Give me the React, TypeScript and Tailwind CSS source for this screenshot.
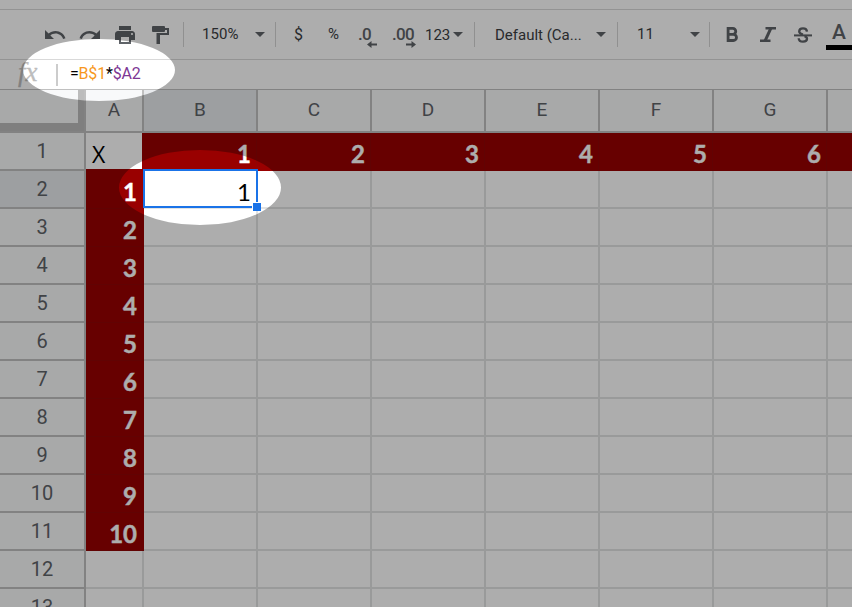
import React from "react";
import { MdUndo, MdRedo, MdPrint } from "react-icons/md";

const columns = ["B", "C", "D", "E", "F", "G", ""];
const rows = Array.from({ length: 13 }, (_, i) => i + 1);

function Separator({ className = "" }: { className?: string }) {
  return <div className={`h-[25px] w-px shrink-0 bg-[#d5d5d5] ${className}`} />;
}

function Caret({ className = "" }: { className?: string }) {
  return (
    <svg className={`h-[5px] w-[10px] shrink-0 fill-[#5f6368] ${className}`} viewBox="0 0 10 5">
      <path d="M0 0h10L5 5z" />
    </svg>
  );
}

function PaintRoller() {
  return (
    <svg className="ml-[15px] h-[18px] w-[17px] shrink-0 fill-[#5f6368]" viewBox="0 0 17 18">
      <path d="M1 0h11q1 0 1 1v1h4v7H8v9H4.500V7H15V4h-2v1q0 1-1 1H1Q0 6 0 5V1Q0 0 1 0z" />
    </svg>
  );
}

function Decimal({ label, right }: { label: string; right?: boolean }) {
  return (
    <div className="relative shrink-0 pb-px text-[17px] leading-5 font-medium tracking-[-0.700px] text-[#5f6368]">
      {label}
      <svg
        className={`absolute bottom-[-3px] h-[7px] w-[10px] fill-[#5f6368] ${right ? "right-[-2px]" : "right-[-6px]"}`}
        viewBox="0 0 10 7"
      >
        <path d={right ? "M0 2.500h5.500V0L10 3.500 5.500 7V4.500H0z" : "M10 2.500H4.500V0L0 3.500 4.500 7V4.500H10z"} />
      </svg>
    </div>
  );
}

function Toolbar() {
  return (
    <div className="flex h-[50px] items-center border-b border-[#d9d9d9] text-[15px] text-[#3c4043]">
      <MdUndo className="ml-[43px] size-6 shrink-0 text-[#5f6368]" />
      <MdRedo className="ml-[11px] size-6 shrink-0 text-[#5f6368]" />
      <MdPrint className="ml-[11px] size-6 shrink-0 text-[#5f6368]" />
      <PaintRoller />
      <Separator className="ml-[14px]" />
      <div className="ml-[18px] w-[53px] shrink-0 tracking-[0.100px]">150%</div>
      <Caret />
      <Separator className="ml-[10px]" />
      <div className="ml-[18px] w-[34px] shrink-0 text-[16px]">$</div>
      <div className="w-[30px] shrink-0">%</div>
      <div className="flex w-[67px] shrink-0 gap-[21px]">
        <Decimal label=".0" />
        <Decimal label=".00" right />
      </div>
      <div className="w-[28px] shrink-0 pt-px">123</div>
      <Caret />
      <Separator className="ml-[11px]" />
      <div className="ml-[20px] w-[101px] shrink-0 pt-px whitespace-nowrap">Default (Ca...</div>
      <Caret />
      <Separator className="ml-[11px]" />
      <div className="ml-[19px] w-[53px] shrink-0">11</div>
      <Caret />
      <Separator className="ml-[9px]" />
      <svg className="ml-[16px] h-[15px] w-[13px] shrink-0 fill-none stroke-[#5f6368]" strokeWidth="2.800" viewBox="0 0 13 15">
        <path d="M2 1.400h4.800a2.900 2.900 0 0 1 0 5.900H2M2 7.300h5.400a3.100 3.100 0 0 1 0 6.200H2M2.100 0v15" />
      </svg>
      <svg className="ml-[21px] h-[15px] w-[16px] shrink-0 fill-none stroke-[#5f6368]" strokeWidth="2.400" viewBox="0 0 16 15">
        <path d="M5.500 1.300H16M0 13.700h10.500" />
        <path d="M10.800 1.300L5.200 13.700" strokeWidth="3" />
      </svg>
      <div className="ml-[18px] grid h-[18px] w-[18px] shrink-0 place-items-center">
        <svg className="h-[16px] w-[18px] fill-none stroke-[#5f6368]" viewBox="0 0 18 16">
          <path d="M13 4.600C12.800 2.400 11.200 1.300 9 1.300S5.200 2.500 5.200 4.400C5.200 6.200 6.800 6.900 9 7.500" strokeWidth="2.300" />
          <path d="M10.500 9.200c1.700.6 2.500 1.300 2.500 2.600 0 1.800-1.600 2.900-4 2.900s-4.200-1.200-4.300-3.500" strokeWidth="2.300" />
          <path d="M0 8.400h18" strokeWidth="2" />
        </svg>
      </div>
      <div className="ml-[14px] flex w-[30px] shrink-0 flex-col self-start pt-[11px]">
        <span className="h-[24px] pl-[6px] text-[21px] leading-[23px] font-medium text-[#5f6368]">A</span>
        <span className="h-[5px] bg-black" />
      </div>
    </div>
  );
}

function FormulaBar() {
  return (
    <div className="flex h-[30px] items-center border-b border-[#c0c0c0]">
      <span className="ml-[18px] w-[38px] pb-[5px] font-['Liberation_Serif',serif] text-[27px] leading-[24px] text-[#bdbdbd] italic [-webkit-text-stroke:0.300px_#bdbdbd]">
        fx
      </span>
      <span className="h-[22px] w-[2px] bg-[#cccccc]" />
      <span className="ml-[12px] pb-[2px] text-[16px] leading-5 tracking-[-0.200px] whitespace-nowrap text-black">
        =<span className="text-[#f7981d]">B$1</span>*<span className="text-[#7e3794]">$A2</span>
      </span>
    </div>
  );
}

function ColumnHeaders() {
  return (
    <div className="flex h-[43px] text-[19px] text-[#5f6368]">
      <div className="flex h-[43px] w-[86px] shrink-0 border-r-2 border-b-2 border-[#c0c0c0]">
        <div className="h-full w-full border-r-[6px] border-b-[8px] border-[#bcbcbc] bg-[#f8f9fa]" />
      </div>
      <div className="grid w-[58px] shrink-0 place-items-center border-r-2 border-b-2 border-[#c0c0c0] bg-[#f8f9fa] pb-px">
        A
      </div>
      {columns.map((c) => (
        <div
          key={c}
          className={`grid w-[114px] shrink-0 place-items-center border-r-2 border-b-2 border-[#c0c0c0] pb-px ${
            c === "B" ? "bg-[#e8eaed]" : "bg-[#f8f9fa]"
          }`}
        >
          {c}
        </div>
      ))}
    </div>
  );
}

function Row({ n }: { n: number }) {
  const filled = n >= 2 && n <= 11;
  return (
    <div className="flex h-[38px] shrink-0 font-['Lato',sans-serif] text-[24px] leading-[38px]">
      <div
        className={`grid w-[86px] shrink-0 place-items-center border-r-2 border-b-2 border-[#c0c0c0] pb-px font-['Roboto',sans-serif] text-[20px] leading-6 text-[#5f6368] ${
          n === 2 ? "bg-[#e8eaed]" : "bg-[#f8f9fa]"
        }`}
      >
        {n}
      </div>
      {n === 1 ? (
        <div className="relative w-[56px] shrink-0 pt-[2px] pl-[6px] font-['Open_Sans',sans-serif] text-[23px] text-black">
          X
          <span className="absolute bottom-0 left-0 h-[2px] w-full bg-[#990000]" />
        </div>
      ) : (
        <div
          className={`w-[58px] shrink-0 pt-[2px] text-right font-bold text-white [-webkit-text-stroke:0.400px_white] ${
            filled
              ? "border-b border-[#8f0505] bg-[#990000] pr-[7px]"
              : "border-r-2 border-b-2 border-[#e2e3e3]"
          }`}
        >
          {filled ? n - 1 : ""}
        </div>
      )}
      {columns.map((c, i) =>
        n === 1 ? (
          <div
            key={c}
            className={`shrink-0 border-r border-[#8f0505] bg-[#990000] pt-[2px] pr-[5px] text-right font-bold text-white [-webkit-text-stroke:0.400px_white] ${
              i === 0 ? "w-[115px]" : "w-[114px]"
            }`}
          >
            {c && i + 1}
          </div>
        ) : (
          <div
            key={c}
            className="w-[114px] shrink-0 border-r-2 border-b-2 border-[#e2e3e3] pt-[2px] pr-[5px] text-right text-black"
          >
            {n === 2 && i === 0 ? "1" : ""}
          </div>
        ),
      )}
    </div>
  );
}

export default function App() {
  return (
    <div className="relative h-[607px] w-[852px] overflow-hidden bg-white font-['Roboto',sans-serif]">
      <div className="h-[10px] border-b border-[#d9d9d9]" />
      <Toolbar />
      <FormulaBar />
      <ColumnHeaders />
      <div className="flex flex-col">
        {rows.map((n) => (
          <Row key={n} n={n} />
        ))}
      </div>
      <div className="absolute top-[169px] left-[143px] h-[39px] w-[115px] border-2 border-[#1a73e8]">
        <span className="absolute right-[-5px] bottom-[-5px] size-[9px] border-t border-l border-white bg-[#1a73e8]" />
      </div>
      <svg className="absolute inset-0 h-[607px] w-[852px]" viewBox="0 0 852 607">
        <path
          fillRule="evenodd"
          className="fill-black/32"
          d="M0 0H852V607H0zM23 70a76 31 0 1 0 152 0a76 31 0 1 0-152 0zM119 187.500a81 37.500 0 1 0 162 0a81 37.500 0 1 0-162 0z"
        />
      </svg>
    </div>
  );
}
